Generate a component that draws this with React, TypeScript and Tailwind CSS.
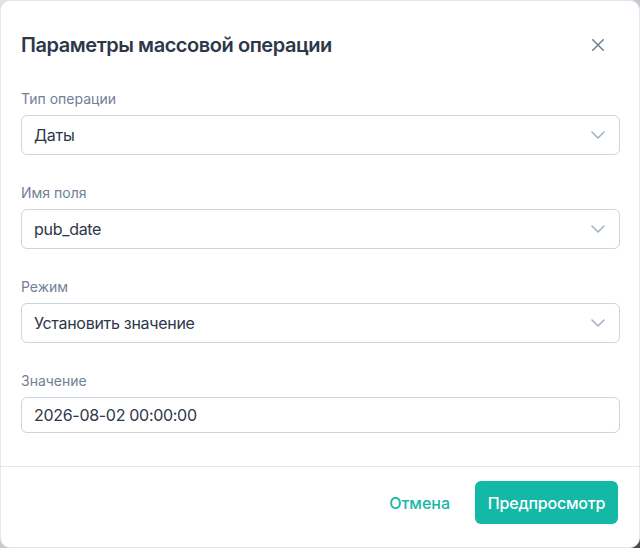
import React from "react";

function Chevron() {
  return (
    <svg width="14" height="8" viewBox="0 0 14 8" fill="none">
      <path d="M1 1l6 6 6-6" stroke="#a0aec0" strokeWidth="1.5" strokeLinecap="round" strokeLinejoin="round" />
    </svg>
  );
}

function SelectBox({ value }: { value: string }) {
  return (
    <div className="h-10 w-full rounded-[6px] border border-[#cdd5e0] bg-white flex items-center justify-between pl-3 pr-[14px]">
      <span className="text-[16px] tracking-[-0.3px] text-[#2d3748]">{value}</span>
      <Chevron />
    </div>
  );
}

function Field({ label, children, first }: { label: string; children: React.ReactNode; first?: boolean }) {
  return (
    <div className={first ? "mt-[30px]" : "mt-[28px]"}>
      <div className="text-[14px] leading-5 text-[#718096] mb-[6px]">{label}</div>
      {children}
    </div>
  );
}

export default function App() {
  return (
    <div className="w-[640px] h-[548px] bg-gradient-to-br from-[#dfe3e8] via-[#c7cbd1] to-[#4b4b4b] font-['Inter',sans-serif]">
      <div className="w-full h-full bg-white rounded-[10px] border border-[#e2e8f0] flex flex-col">
        <div className="flex items-center justify-between pl-5 pr-[29px] pt-[30px]">
          <h2 className="text-[20px] leading-7 font-semibold tracking-[-0.45px] text-[#2d3748]">Параметры массовой операции</h2>
          <button className="w-6 h-6 flex items-center justify-center">
            <svg width="12" height="12" viewBox="0 0 12 12" fill="none">
              <path d="M0.75 0.75l10.5 10.5M11.25 0.75L0.75 11.25" stroke="#718096" strokeWidth="1.5" strokeLinecap="round" />
            </svg>
          </button>
        </div>
        <div className="pl-5 pr-[19px] pb-[33px]">
          <Field label="Тип операции" first>
            <SelectBox value="Даты" />
          </Field>
          <Field label="Имя поля">
            <SelectBox value="pub_date" />
          </Field>
          <Field label="Режим">
            <SelectBox value="Установить значение" />
          </Field>
          <Field label="Значение">
            <div className="h-9 w-full rounded-[6px] border border-[#cdd5e0] bg-white flex items-center pl-3">
              <span className="text-[16px] tracking-[-0.3px] text-[#2d3748]">2026-08-02 00:00:00</span>
            </div>
          </Field>
        </div>
        <div className="border-t border-[#e2e8f0] flex-1 flex items-start justify-end pt-[14px] pr-[21px]">
          <button className="h-[43px] flex items-center text-[16px] font-medium text-[#14b8a6] mr-[25px]">Отмена</button>
          <button className="h-[43px] w-[143px] rounded-[6px] bg-[#14b8a6] text-white text-[16px] font-medium tracking-[-0.2px] flex items-center justify-center">
            Предпросмотр
          </button>
        </div>
      </div>
    </div>
  );
}
